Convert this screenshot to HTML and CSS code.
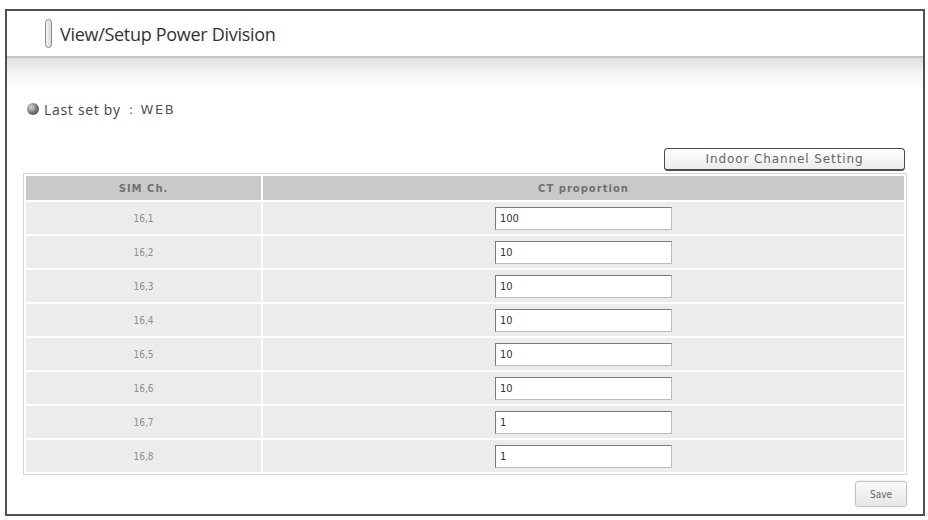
FILE: index.html
```html
<!DOCTYPE html>
<html lang="en">
<head>
    <meta charset="UTF-8">
    <title>View/Setup Power Division</title>
    <link rel="stylesheet" href="styles.css">
</head>
<body>
    <div class="frame">
        <div class="title-bar">
            <span class="title-icon"></span>
            <h1>View/Setup Power Division</h1>
        </div>

        <div class="content">
            <p class="last-set"><span class="bullet"></span>Last set by<span class="last-set-by">: WEB</span></p>

            <div class="toolbar">
                <button class="btn-indoor">Indoor Channel Setting</button>
            </div>

            <table class="ct-table">
                <thead>
                    <tr>
                        <th class="col-ch">SIM Ch.</th>
                        <th>CT proportion</th>
                    </tr>
                </thead>
                <tbody>
                    <tr><td>16,1</td><td><input type="text" value="100"></td></tr>
                    <tr><td>16,2</td><td><input type="text" value="10"></td></tr>
                    <tr><td>16,3</td><td><input type="text" value="10"></td></tr>
                    <tr><td>16,4</td><td><input type="text" value="10"></td></tr>
                    <tr><td>16,5</td><td><input type="text" value="10"></td></tr>
                    <tr><td>16,6</td><td><input type="text" value="10"></td></tr>
                    <tr><td>16,7</td><td><input type="text" value="1"></td></tr>
                    <tr><td>16,8</td><td><input type="text" value="1"></td></tr>
                </tbody>
            </table>

            <div class="actions">
                <button class="btn-save">Save</button>
            </div>
        </div>
    </div>
</body>
</html>
```

FILE: styles.css
```css
* {
    margin: 0;
    padding: 0;
    box-sizing: border-box;
}

body {
    background: #fff;
    font-family: 'Liberation Sans', Arial, sans-serif;
    color: #333;
}

.frame {
    margin: 9px 0 0 5px;
    width: 920px;
    height: 507px;
    border: 2px solid #505050;
    background: #fff;
}

.title-bar {
    height: 47px;
    display: flex;
    align-items: center;
    padding-left: 38px;
    border-bottom: 2px solid #c4c4c4;
}

.title-icon {
    width: 7px;
    height: 29px;
    border: 1px solid #8a8a8a;
    border-radius: 4px;
    background: linear-gradient(90deg, #f4f4f4, #d8d8d8);
    margin-right: 8px;
}

h1 {
    font-family: 'Open Sans', sans-serif;
    font-weight: normal;
    font-size: 18px;
    letter-spacing: -0.3px;
    color: #333;
}

.content {
    padding: 42px 16px 0;
    background: linear-gradient(#e0e0e0, #f3f3f3 14px, #fff 32px) no-repeat;
    background-size: 100% 34px;
}

.last-set {
    display: flex;
    align-items: center;
    height: 18px;
    font-family: 'Open Sans', sans-serif;
    font-size: 14px;
    letter-spacing: 0.7px;
    color: #444;
    padding-left: 4px;
}

.last-set-by {
    margin-left: 8px;
    font-family: 'DejaVu Sans', sans-serif;
    font-size: 13px;
    letter-spacing: 1.6px;
    color: #555;
}

.bullet {
    width: 12px;
    height: 12px;
    border-radius: 50%;
    background: radial-gradient(circle at 35% 35%, #d8d8d8, #6e6e6e 55%, #3c3c3c);
    margin-right: 5px;
}

.toolbar {
    display: flex;
    justify-content: flex-end;
    margin-top: 30px;
    padding-right: 2px;
}

.btn-indoor {
    width: 241px;
    height: 23px;
    border: 1px solid #4a4a4a;
    border-bottom-width: 2px;
    border-radius: 4px;
    background: linear-gradient(#ffffff, #ebebeb);
    font-family: 'DejaVu Sans', sans-serif;
    font-size: 12px;
    letter-spacing: 0.9px;
    color: #666;
    cursor: pointer;
}

.ct-table {
    width: 884px;
    margin-top: 2px;
    border: 1px solid #d6d6d6;
    border-spacing: 2px;
    background: #fff;
}

.ct-table th {
    height: 24px;
    background: #c9c9c9;
    font-family: 'DejaVu Sans', sans-serif;
    font-size: 10px;
    font-weight: bold;
    letter-spacing: 1px;
    color: #707070;
    text-align: center;
}

.ct-table .col-ch {
    width: 235px;
}

.ct-table td {
    height: 32px;
    background: #ececec;
    text-align: center;
    font-family: 'DejaVu Sans Condensed', sans-serif;
    font-size: 10px;
    color: #8c8c8c;
}

.ct-table input {
    width: 177px;
    height: 23px;
    border: 1px solid #7a7a7a;
    border-right-color: #bdbdbd;
    border-bottom-color: #bdbdbd;
    background: #fff;
    padding: 0 4px;
    font-family: 'DejaVu Sans Condensed', sans-serif;
    font-size: 11px;
    color: #333;
    vertical-align: middle;
}

.actions {
    display: flex;
    justify-content: flex-end;
    margin-top: 6px;
}

.btn-save {
    width: 52px;
    height: 26px;
    border: 1px solid #c4c4c4;
    border-radius: 3px;
    background: linear-gradient(#fafafa, #e6e6e6);
    box-shadow: 0 0 2px rgba(0, 0, 0, 0.15);
    font-family: 'DejaVu Sans Condensed', sans-serif;
    font-size: 10px;
    color: #666;
    cursor: pointer;
}
```
